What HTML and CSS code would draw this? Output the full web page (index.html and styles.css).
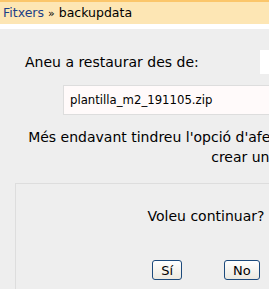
FILE: index.html
```html
<!DOCTYPE html>
<html lang="ca">
<head>
    <meta charset="UTF-8" />
    <title>Restaura</title>
    <link rel="stylesheet" href="styles.css">
</head>
<body>

    <div class="navbar">
        <a href="#" class="crumb-link">Fitxers</a> <span class="sep">&raquo;</span> backupdata
    </div>

    <div class="content">
        <div class="source-row">
            <span class="source-label">Aneu a restaurar des de:</span>
            <span class="source-cell"></span>
        </div>

        <div class="file-box">plantilla_m2_191105.zip</div>

        <p class="notice">
            Més endavant tindreu l'opció d'afegir aquesta còpia a un curs existent<br>
            crear un curs nou.
        </p>

        <div class="confirm-box">
            <p class="confirm-question">Voleu continuar?</p>
            <div class="confirm-buttons">
                <button class="btn">Sí</button>
                <button class="btn">No</button>
            </div>
        </div>
    </div>

</body>
</html>
```

FILE: styles.css
```css
html, body {
    overflow: hidden;
}

body {
    margin: 0;
    padding: 0;
    background-color: #fff;
    font-family: "DejaVu Sans", Verdana, sans-serif;
    font-size: 14px;
    color: #000;
}

.navbar {
    border-top: 2px solid #fbc66b;
    background-color: #fde6b4;
    height: 22px;
    line-height: 22px;
    padding-left: 3px;
    font-size: 12.5px;
    white-space: nowrap;
}

.crumb-link {
    color: #1c3f87;
    text-decoration: none;
}

.sep {
    font-size: 11px;
}

.content {
    margin-top: 5px;
    background-color: #eeeeee;
    width: 700px;
    height: 300px;
    padding-top: 21px;
}

.source-row {
    display: flex;
    align-items: center;
    height: 24px;
    padding-left: 25px;
}

.source-label {
    width: 235px;
}

.source-cell {
    width: 120px;
    height: 24px;
    background-color: #fff;
}

.file-box {
    margin: 11px 0 0 63px;
    width: 300px;
    height: 28px;
    line-height: 28px;
    padding-left: 6px;
    border: 1px solid #dddddd;
    background-color: #fffafa;
    font-size: 11.7px;
}

.notice {
    margin: 12px 0 0 0;
    width: 550px;
    text-align: center;
    line-height: 20px;
    white-space: nowrap;
}

.confirm-box {
    margin: 16px 0 0 15px;
    width: 380px;
    height: 200px;
    border: 1px solid #dddddd;
    text-align: center;
}

.confirm-question {
    margin: 24px 0 0 0;
}

.confirm-buttons {
    display: flex;
    justify-content: center;
    gap: 42px;
    margin-top: 36px;
}

.btn {
    font-family: "DejaVu Sans", Verdana, sans-serif;
    font-size: 13px;
    height: 20px;
    padding: 0 8px;
    border: 1px solid #1c4a7c;
    border-radius: 3px;
    background: linear-gradient(#ffffff, #ece9e0);
    color: #000;
}
```
